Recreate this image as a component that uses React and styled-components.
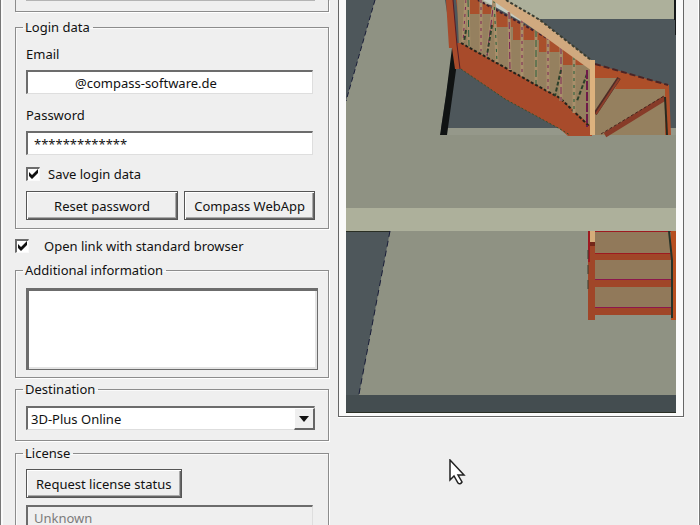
import React, { useState } from "react";
import styled, { createGlobalStyle, css } from "styled-components";

const GlobalStyle = createGlobalStyle`
  * {
    box-sizing: border-box;
  }
  body {
    margin: 0;
    background: #efefef;
    color: #111;
    font: 13px/18px "Noto Sans", "Open Sans", sans-serif;
  }
  input, select, textarea, button {
    font: inherit;
    color: inherit;
    border-radius: 0;
  }
`;

const Dialog = styled.main`
  position: relative;
  display: grid;
  grid-template-columns: minmax(0, 314fr) minmax(0, 346fr);
  column-gap: 9px;
  align-items: start;
  height: 100vh;
  overflow: hidden;
  padding: 0 15px 0 14px;
  border: solid #777;
  border-width: 0 1px;
  box-shadow: inset 2px 0 #fafafa, inset -1px 0 #fff;
`;

const Settings = styled.form`
  display: flex;
  flex-direction: column;
`;

const Group = styled.fieldset`
  min-width: 0;
  margin: ${(props) => props.$gap || 0}px 0 0;
  padding: 0 10px ${(props) => props.$bottom || 8}px;
  border: 1px solid #8c8c8c;
  box-shadow: 1px 1px #fff, inset 1px 1px #fafafa;
`;

const GroupEnd = styled.div`
  height: 12px;
  padding: 0 13px 0 10px;
  border: solid #8c8c8c;
  border-width: 0 1px 1px;
  box-shadow: 1px 1px #fff;
`;

const GroupEndEdge = styled.div`
  height: 1px;
  background: #b4b4b4;
`;

const Legend = styled.legend`
  margin-left: -3px;
  padding: 0 3px 0 2px;
  line-height: 19px;
`;

const Label = styled.label`
  display: block;
  margin: ${(props) => props.$top}px 0 7px;
`;

const sunken = css`
  border: solid;
  border-width: 2px 1px 1px 2px;
  border-color: #6c6c6c #dedede #dedede #6c6c6c;
  outline: none;
`;

const TextField = styled.input`
  ${sunken}
  display: block;
  width: calc(100% - 5px);
  height: 24px;
  margin-top: ${(props) => props.$top || 0}px;
  padding: 0 6px 0 ${(props) => props.$indent || 6}px;
  background: #fff;

  &:disabled {
    background: #efefef;
    color: #7b7b7b;
  }
`;

const CheckRow = styled.label`
  display: flex;
  align-items: center;
  gap: ${(props) => props.$gap}px;
  margin: ${(props) => props.$margin};
`;

const CheckBox = styled.span`
  display: grid;
  width: 14px;
  height: 14px;

  > * {
    grid-area: 1 / 1;
  }
  svg {
    place-self: center;
    pointer-events: none;
  }
  input:not(:checked) + svg {
    display: none;
  }
`;

const CheckInput = styled.input`
  ${sunken}
  border-right-color: #fafafa;
  border-bottom-color: #fafafa;
  appearance: none;
  width: 14px;
  height: 14px;
  margin: 0;
  background: #fff;
`;

const ButtonRow = styled.div`
  display: grid;
  grid-template-columns: 153fr 130fr;
  gap: 6px;
  margin: 8px 3px 0 0;
`;

const Button = styled.button`
  height: 29px;
  margin-top: ${(props) => props.$top || 0}px;
  padding: 0 9px;
  background: #efefef;
  border: 1px solid #555;
  box-shadow: inset 1px 1px #fff, inset -1px -1px #666, inset -2px -2px #aaa;
  white-space: nowrap;
`;

const Notes = styled.textarea`
  display: block;
  width: 100%;
  height: 82px;
  margin-top: 8px;
  padding: 4px;
  background: #fff;
  border: solid #6c6c6c;
  border-width: 3px 1px 1px 3px;
  box-shadow: inset -2px -2px #e4e4e4;
  outline: none;
  resize: none;
`;

const SelectBox = styled.div`
  display: grid;
  grid-template-columns: 1fr 21px;
  height: 24px;
  margin: 7px 3px 0 0;
`;

const Select = styled.select`
  ${sunken}
  grid-area: 1 / 1 / 2 / 3;
  appearance: none;
  padding: 0 24px 0 3px;
  background: #fff;
`;

const SelectArrow = styled.span`
  grid-area: 1 / 2;
  display: grid;
  place-items: center;
  margin-top: 2px;
  background: #efefef;
  border: solid;
  border-width: 1px 2px 2px 1px;
  border-color: #fff #666 #666 #fff;
  pointer-events: none;
`;

const Preview = styled.section`
  padding: 0 7px 3px;
  background: #fafafa;
  border: solid #666;
  border-width: 0 1px 1px;
  box-shadow: 0 1px #fff;

  svg {
    display: block;
    width: 100%;
    height: auto;
  }
`;

const Pointer = styled.svg`
  position: absolute;
  left: 447px;
  top: 459px;
`;

function Check({ label, gap, margin }) {
  const [checked, setChecked] = useState(true);

  return (
    <CheckRow $gap={gap} $margin={margin}>
      <CheckBox>
        <CheckInput
          type="checkbox"
          checked={checked}
          onChange={(e) => setChecked(e.target.checked)}
        />
        <svg width="10" height="10" viewBox="0 0 10 10">
          <path d="M1 3v4l3 3 6-6V0L4 6z" fill="#111" />
        </svg>
      </CheckBox>
      {label}
    </CheckRow>
  );
}

const balusters = [
  "M466 0 463 42",
  "M468 0 469 46",
  "M481 0 481 51",
  "M494 0 487 56",
  "M494 0 497 62",
  "M509 12 510 70",
  "M522 20 522 76",
  "M536 30 536 84",
  "M548 37 548 91",
  "M561 47 561 101",
  "M574 57 574 113",
];

function Staircase() {
  return (
    <svg viewBox="346 0 330 413" role="img" aria-label="Staircase preview">
      <rect x="346" width="330" height="413" fill="#4e575b" />

      {/* upper floor */}
      <path d="M375 0h70l8 50-13 85h7v-7h229v80H346V101z" fill="#8f9283" />
      <path d="M440 128h236v7H440z" fill="#95988a" />
      <path d="M458 0h218v19H530L510 8z" fill="#adb09b" />
      <path d="M674 0h2v35h-1V20h-1z" fill="#15181a" />
      <path d="M375 0 346 101" stroke="#191d38" strokeDasharray="5 3" />
      <path d="M452 48h3l1 22-9 65h-7l6-40z" fill="#101313" />

      {/* straight flight */}
      <path d="M456 0h22l82 44 32 20v65l-12-8-118-78z" fill="#a9502c" />
      <path
        d="M457 0h13v14h23v13h20v13h26v12h24v13h29v64l-32-26-30-16-71-40z"
        fill="#95805f"
      />
      <path d="M483 0h14l25 14v8z" fill="#c6cbc0" />
      <path d="M446 0h7l4 43h4l99 55 32 29v9h-24l-8-7-55-30-44-30h-6l-3-21h-3z" fill="#a84b2b" />
      <path d="M453 0 457 45 460 69" stroke="#541d28" fill="none" />
      <path d="M461 43 545 90 560 98 590 127" stroke="#24231c" fill="none" strokeWidth="2" strokeDasharray="3 2" />
      <path d="M461 69 505 99 560 129 570 135" fill="none" stroke="#35502d" strokeDasharray="2 2" />
      <path d="M478 0 560 45 590 65" stroke="#3c2130" fill="none" strokeWidth="2" strokeDasharray="3 2" />
      {balusters.map((d, i) => (
        <g key={d} fill="none">
          <path d={d} stroke="#a98f6b" strokeWidth="3" />
          <path
            d={d}
            stroke={i % 3 === 1 ? "#235d3b" : "#7a2455"}
            strokeDasharray={i % 2 ? "7 3" : "3 4"}
          />
        </g>
      ))}
      <path d="M466 30 464 42M492 25 487 55M561 70 555 96M587 74 577 101" stroke="#2c402b" strokeWidth="2" strokeDasharray="4 2" />
      <path d="M492 0h14l34 20 52 41v10l-47-34z" fill="#d0a97f" />
      <path d="M506 0 540 20 591 60" stroke="#3a3d32" fill="none" strokeWidth="2" strokeDasharray="3 2" />
      <path d="M587 70v57" stroke="#6e1a4a" strokeWidth="2" strokeDasharray="9 2" />

      {/* winder steps */}
      <path d="M595 64 668 85h1l2 50h-76z" fill="#ad4f29" />
      <path d="M595 78h24l-4 11h50v46h-70z" fill="#95805f" />
      <path d="M595 64 668 85" stroke="#4b2425" strokeWidth="2" strokeDasharray="6 3" />
      <path d="M619 78 595 114" stroke="#4f2c26" strokeWidth="4" />
      <path d="M619 79 596 114" stroke="#8d3e2a" strokeWidth="2" />
      <path d="M605 135 665 98" stroke="#873b28" strokeWidth="5" />
      <path d="M601 134 664 96" stroke="#45261f" strokeDasharray="3 2" />
      <path d="M665 97 667 135" stroke="#29291f" strokeWidth="2" />
      <path d="M590 60h5v75h-5z" fill="#ddb27e" />

      {/* slab between the floors */}
      <path d="M346 208h330v23H346z" fill="#adb09b" />

      {/* lower floor */}
      <path d="M390 231h286v164H359z" fill="#8f9283" />
      <path d="M346 395h330v18H346z" fill="#444d50" />
      <path d="M346 231.500h44M346 412.500h330" stroke="#292e24" />
      <path d="M390 231 359 394" stroke="#191d38" strokeDasharray="6 4" />
      <path d="M595 231h77v84h-77z" fill="#91795a" />
      <path d="M595 253h76v7h-76zM595 279h76v8h-76zM595 307h76v8h-76zM588 231h7v89h-7z" fill="#a04628" />
      <path d="M590 231h5v11h-5z" fill="#d5ad7a" />
      <path d="M590 242h5v4h-5z" fill="#742719" />
      <path d="M588 231h2v31h-2zM595 231h77v1h-77zM595 253h75v1h-75z" fill="#9e1a20" />
      <path d="M595 279.500h76M595 307.500h76" stroke="#8d174c" />
      <path d="M671 231h5v89h-5z" fill="#b74f20" />
      <path d="M669 231 672 260v58" stroke="#263329" strokeWidth="2" fill="none" />
      <path d="M588 250v44" stroke="#3b3d2e" strokeDasharray="9 6" />
    </svg>
  );
}

export default function App() {
  const [email, setEmail] = useState("@compass-software.de");
  const [password, setPassword] = useState("*************");

  return (
    <Dialog>
      <GlobalStyle />
      <Settings onSubmit={(e) => e.preventDefault()}>
        <GroupEnd>
          <GroupEndEdge />
        </GroupEnd>

        <Group $gap={6}>
          <Legend>Login data</Legend>
          <Label htmlFor="email" $top={8}>Email</Label>
          <TextField
            id="email"
            $indent={47}
            value={email}
            onChange={(e) => setEmail(e.target.value)}
          />
          <Label htmlFor="password" $top={12}>Password</Label>
          <TextField
            id="password"
            value={password}
            onChange={(e) => setPassword(e.target.value)}
          />
          <Check label="Save login data" gap={8} margin="10px 0 0" />
          <ButtonRow>
            <Button type="button">Reset password</Button>
            <Button type="button">Compass WebApp</Button>
          </ButtonRow>
        </Group>

        <Check label="Open link with standard browser" gap={15} margin="8px 0 0" />

        <Group $gap={6} $bottom={7}>
          <Legend>Additional information</Legend>
          <Notes aria-label="Additional information" />
        </Group>

        <Group $gap={2} $bottom={10}>
          <Legend>Destination</Legend>
          <SelectBox>
            <Select aria-label="Destination">
              <option>3D-Plus Online</option>
            </Select>
            <SelectArrow>
              <svg width="10" height="6" viewBox="0 0 10 6">
                <path d="M0 0h10L5 6z" fill="#111" />
              </svg>
            </SelectArrow>
          </SelectBox>
        </Group>

        <Group $gap={3}>
          <Legend>License</Legend>
          <Button type="button" $top={6}>Request license status</Button>
          <TextField $top={7} aria-label="License status" value="Unknown" disabled />
        </Group>
      </Settings>

      <Preview>
        <Staircase />
      </Preview>

      <Pointer width="18" height="27" viewBox="0 0 18 27" aria-hidden="true">
        <path
          d="M2 1v20l4-4 4 7q2 2 4-1l-4-7h6z"
          fill="#fff"
          stroke="#222"
          strokeWidth="1.500"
        />
      </Pointer>
    </Dialog>
  );
}
